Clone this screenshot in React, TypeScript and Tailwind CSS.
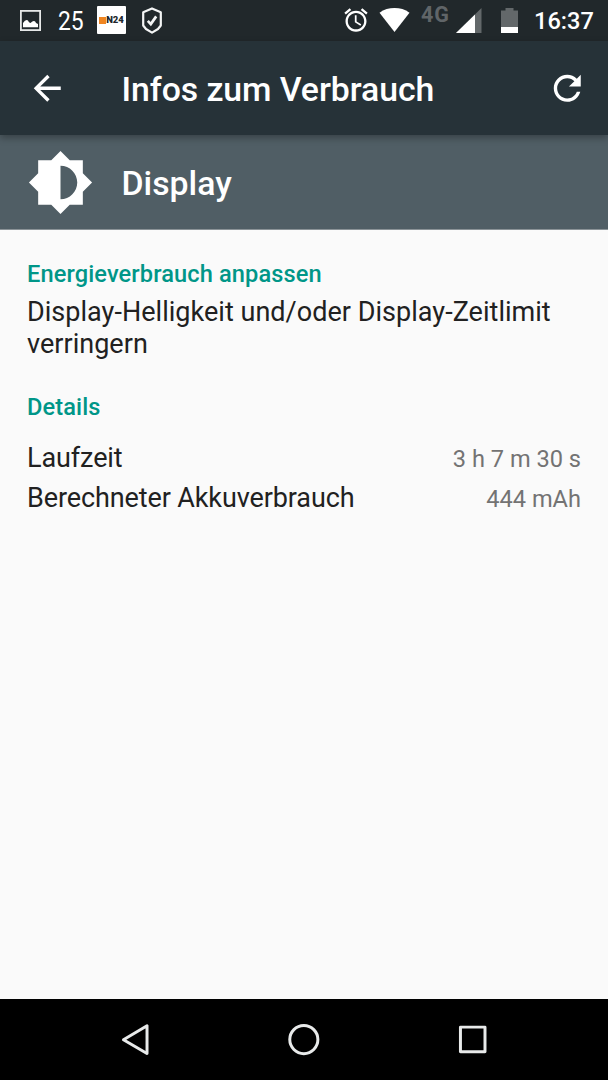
import React from "react";

function StatusBar() {
  return (
    <header className="flex h-[41px] shrink-0 items-start bg-[#21282b] text-white">
      <svg className="ml-[20px] mt-[10px] h-[21px] w-[21px] shrink-0" viewBox="0 0 21 21">
        <rect x="0.9" y="0.9" width="19.2" height="19.2" fill="none" stroke="#e6e8e8" strokeWidth="1.8" />
        <path d="M3 17.200v-4.200q1.800-3 3.800-3 1.200 0 2.200 2.200l1.500.8q2.200-2.200 3.700-1.900 1.500.4 1.800 2l2 1v3.100z" fill="#fff" />
      </svg>
      <span className="ml-[17px] mt-[6px] w-[28px] shrink-0 origin-left scale-x-[0.88] text-[26px] leading-[30px] text-white">25</span>
      <div className="ml-[11px] mt-[6px] flex h-[28px] w-[29px] shrink-0 items-center justify-center rounded-[1px] bg-white">
        <span className="h-[7px] w-[7px] shrink-0 bg-[#ef8521]" />
        <span className="text-[9.5px] leading-[10px] font-black tracking-[-0.1px] text-[#22272c]">N24</span>
      </div>
      <svg className="ml-[16px] mt-[7px] h-[27px] w-[20px] shrink-0" viewBox="0 0 20 27" fill="none" stroke="#f4f5f5" strokeWidth="2.2">
        <path d="M10 1.400L18.800 5.200v13.300L16 22l-6 3.600L4 22l-2.800-3.500V5.200z" strokeLinejoin="round" />
        <path d="M5.800 13.900l3 3.200 5.400-7.700" strokeWidth="2.700" />
      </svg>

      <svg className="ml-auto mt-[6px] h-[28px] w-[28px] shrink-0" viewBox="0 0 24 24" fill="#fff">
        <path d="M22 5.720l-4.600-3.860-1.290 1.530 4.600 3.860L22 5.720zM7.880 3.390L6.600 1.860 2 5.710l1.290 1.530 4.590-3.850zM12.500 8H11v6l4.750 2.850.75-1.230-4-2.370V8zM12 4c-4.970 0-9 4.030-9 9s4.020 9 9 9c4.970 0 9-4.030 9-9s-4.030-9-9-9zm0 16c-3.870 0-7-3.130-7-7s3.130-7 7-7 7 3.130 7 7-3.130 7-7 7z" />
      </svg>
      <svg className="ml-[9px] mt-[8px] h-[24px] w-[31px] shrink-0" viewBox="0 0 31 24" fill="#fff">
        <path d="M15.500 24L.500 4.700C5 1.400 10 0 15.500 0s10.500 1.400 15 4.700z" />
      </svg>
      <span className="ml-[11px] mt-[2px] w-[30px] shrink-0 text-[21.500px] leading-[26px] font-bold tracking-[0.8px] text-[#606568]">4G</span>
      <svg className="ml-[5px] mt-[8px] h-[25px] w-[26px] shrink-0" viewBox="0 0 26 25">
        <path d="M0 25L25.500 0v25z" fill="#63686a" />
        <path d="M0 25L19 6.400V25z" fill="#fff" />
      </svg>
      <svg className="ml-[19px] mt-[8px] h-[25px] w-[17px] shrink-0" viewBox="0 0 17 25">
        <path d="M4.500 0h8v2.500H17V25H0V2.500h4.500z" fill="#63686a" />
        <path d="M0 19h17v6H0z" fill="#fff" />
      </svg>
      <span className="ml-[16px] mr-[14px] mt-[6px] w-[60px] shrink-0 text-[23.600px] leading-[30px] font-medium">16:37</span>
    </header>
  );
}

function AppBar() {
  return (
    <div className="relative z-10 flex h-[94px] shrink-0 items-center bg-[#263238] pr-[21px] pl-[27px] text-white shadow-[0_3px_7px_rgba(0,0,0,0.3)]">
      <svg className="h-[40.5px] w-[40.5px] shrink-0" viewBox="0 0 24 24" fill="currentColor">
        <path d="M20 11H7.830l5.590-5.590L12 4l-8 8 8 8 1.410-1.410L7.830 13H20v-2z" />
      </svg>
      <h1 className="ml-[54px] pt-[3px] text-[33.8px] leading-[40px] font-medium tracking-[-0.06px] whitespace-nowrap">Infos zum Verbrauch</h1>
      <svg className="ml-auto h-[40.5px] w-[40.5px] shrink-0" viewBox="0 0 24 24" fill="currentColor">
        <path d="M17.650 6.350C16.200 4.900 14.210 4 12 4c-4.420 0-7.990 3.580-7.990 8s3.570 8 7.990 8c3.730 0 6.840-2.550 7.730-6h-2.080c-.820 2.330-3.040 4-5.650 4-3.310 0-6-2.690-6-6s2.690-6 6-6c1.660 0 3.140.690 4.220 1.780L13 11h7V4l-2.350 2.350z" />
      </svg>
    </div>
  );
}

function EntryHeader() {
  return (
    <div className="flex h-[95px] shrink-0 items-center border-b border-[#8b9397] bg-[#505e65] pl-[27px] text-white">
      <svg className="h-[67px] w-[67px] shrink-0" viewBox="0 0 24 24" fill="currentColor">
        <path d="M20 15.310L23.310 12 20 8.690V4h-4.690L12 .690 8.690 4H4v4.690L.690 12 4 15.310V20h4.690L12 23.310 15.310 20H20v-4.690zM12 18V6c3.310 0 6 2.690 6 6s-2.690 6-6 6z" />
      </svg>
      <h2 className="ml-[27.5px] pt-[4px] text-[33.8px] leading-[40px] font-medium">Display</h2>
    </div>
  );
}

function DetailRow({ label, value }: { label: string; value: string }) {
  return (
    <div className="flex h-[40px] items-baseline justify-between">
      <dt className="text-[27px] leading-[32px] tracking-[-0.11px] text-[#212121]">{label}</dt>
      <dd className="text-[23.6px] leading-[32px] text-[#737373]">{value}</dd>
    </div>
  );
}

function NavBar() {
  return (
    <nav className="flex h-[81px] shrink-0 items-center bg-black px-[119px]">
      <svg className="h-[34px] w-[32px]" viewBox="0 0 32 34" fill="none" stroke="#e8eaea" strokeWidth="3" strokeLinejoin="round">
        <path d="M4.500 16.700L28.300 2.700v28z" />
      </svg>
      <svg className="ml-[136px] h-[34px] w-[34px]" viewBox="0 0 34 34" fill="none" stroke="#e8eaea" strokeWidth="3">
        <circle cx="17" cy="16.600" r="14.200" />
      </svg>
      <svg className="ml-[135px] h-[34px] w-[34px]" viewBox="0 0 34 34" fill="none" stroke="#e8eaea" strokeWidth="3" strokeLinejoin="round">
        <rect x="5.500" y="4" width="24.800" height="24.800" />
      </svg>
    </nav>
  );
}

export default function App() {
  return (
    <div className="flex h-[1080px] w-[608px] flex-col overflow-hidden bg-[#fafafa] font-[Roboto,sans-serif]">
      <StatusBar />
      <AppBar />
      <EntryHeader />
      <main className="flex-1 px-[27px] pt-[30px]">
        <h3 className="text-[23.6px] leading-[28px] font-medium tracking-[0.12px] text-[#009688]">Energieverbrauch anpassen</h3>
        <p className="mt-[8px] text-[27px] leading-[32px] tracking-[0.03px] text-[#212121]">
          Display-Helligkeit und/oder Display-Zeitlimit verringern
        </p>
        <h3 className="mt-[33px] text-[23.6px] leading-[28px] font-medium tracking-[0.12px] text-[#009688]">Details</h3>
        <dl className="mt-[21px]">
          <DetailRow label="Laufzeit" value="3 h 7 m 30 s" />
          <DetailRow label="Berechneter Akkuverbrauch" value="444 mAh" />
        </dl>
      </main>
      <NavBar />
    </div>
  );
}
